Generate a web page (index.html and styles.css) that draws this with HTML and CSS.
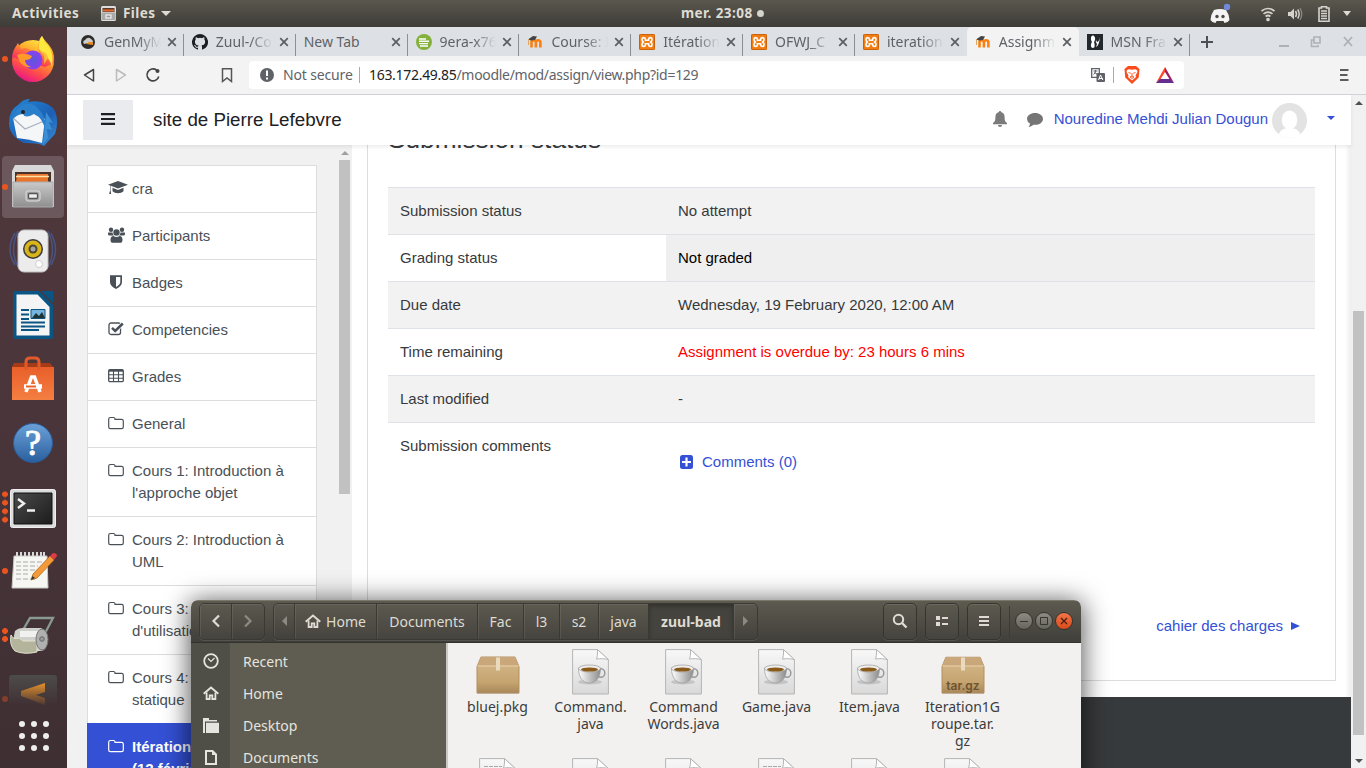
FILE: index.html
```html
<!DOCTYPE html>
<html lang="en">
<head>
<meta charset="utf-8">
<title>site de Pierre Lefebvre</title>
<link rel="stylesheet" href="styles.css">
</head>
<body>
<svg class="defs" width="0" height="0">
  <defs>
    <linearGradient id="gFox" x1="0.8" y1="0" x2="0.3" y2="1"><stop offset="0" stop-color="#fff044"/><stop offset=".4" stop-color="#ffa02a"/><stop offset=".72" stop-color="#ff4b4b"/><stop offset="1" stop-color="#e5128d"/></linearGradient>
    <radialGradient id="gGlobe"><stop offset="0" stop-color="#5b58d8"/><stop offset="1" stop-color="#8a3ff0"/></radialGradient>
    <linearGradient id="gBird" x1="0" y1="0" x2="1" y2="1"><stop offset="0" stop-color="#2489d6"/><stop offset=".6" stop-color="#1c5fb4"/><stop offset="1" stop-color="#3b90d8"/></linearGradient>
    <linearGradient id="gCab" x1="0" y1="0" x2="0" y2="1"><stop offset="0" stop-color="#c9c9c9"/><stop offset="1" stop-color="#8f8f8f"/></linearGradient>
    <linearGradient id="gBag" x1="0" y1="0" x2="0" y2="1"><stop offset="0" stop-color="#e95f2a"/><stop offset="1" stop-color="#f47f42"/></linearGradient>
    <linearGradient id="gHelp" x1="0" y1="0" x2="0" y2="1"><stop offset="0" stop-color="#6ba1d8"/><stop offset="1" stop-color="#2a5f9f"/></linearGradient>
    <linearGradient id="gTerm" x1="0" y1="0" x2="1" y2="1"><stop offset="0" stop-color="#4a4a4a"/><stop offset="1" stop-color="#1c1c1c"/></linearGradient>
    <linearGradient id="gBox" x1="0" y1="0" x2="0" y2="1"><stop offset="0" stop-color="#d6b98c"/><stop offset=".7" stop-color="#c5a470"/><stop offset="1" stop-color="#a9875a"/></linearGradient>
    <linearGradient id="gPage" x1="0" y1="0" x2="0" y2="1"><stop offset="0" stop-color="#f8f8f8"/><stop offset="1" stop-color="#d9d9d9"/></linearGradient>
    <linearGradient id="gCup" x1="0" y1="0" x2="1" y2="0"><stop offset="0" stop-color="#fff"/><stop offset="1" stop-color="#8c8c8c"/></linearGradient>
    <linearGradient id="gSub" x1="0" y1="0" x2="0" y2="1"><stop offset="0" stop-color="#4d4c4a"/><stop offset="1" stop-color="#4d4c4a" stop-opacity="0"/></linearGradient>
    <linearGradient id="gSubS" x1="0" y1="0" x2="0" y2="1"><stop offset="0" stop-color="#e8912c"/><stop offset="1" stop-color="#b06c25" stop-opacity=".15"/></linearGradient>
    <symbol id="folder" viewBox="0 0 16 16"><path d="M.7 4.2A1.7 1.7 0 0 1 2.4 2.5h3A1.5 1.5 0 0 1 7 4v.4h6.600A1.700 1.700 0 0 1 15.300 6v6A1.700 1.700 0 0 1 13.600 13.700H2.400A1.700 1.700 0 0 1 .7 12z" fill="none" stroke="currentColor" stroke-width="1.200"/></symbol>
    <symbol id="moodle" viewBox="0 0 16 16"><path d="M4.500 13.500V8.500a2.200 2.200 0 0 1 4.400 0V13.500m0-5a2.200 2.200 0 0 1 4.500 0V13.500" fill="none" stroke="#f98012" stroke-width="2.600"/><path d="M1 5.500 6 2l4 .5L8 6 4 6.500z" fill="#444"/><path d="M1.500 5v6" stroke="#dca96c"/></symbol>
    <symbol id="xampp" viewBox="0 0 16 16"><rect width="16" height="16" rx="1.500" fill="#f57c10"/><rect x=".5" y=".5" width="15" height="15" rx="1" fill="none" stroke="#c9620a"/><path d="M3 5.300A1.700 1.700 0 0 1 6.400 5.300v1h3.200v-1a1.700 1.700 0 0 1 3.400 0Q13 7 11.700 8 13 9 13 10.700a1.700 1.700 0 0 1-3.400 0v-1H6.400v1a1.700 1.700 0 0 1-3.400 0Q3 9 4.300 8 3 7 3 5.300z" fill="none" stroke="#fff" stroke-width="1.600"/></symbol>
    <symbol id="x" viewBox="0 0 10 10"><path d="m1.200 1.200 7.600 7.600m0-7.600-7.600 7.600" stroke="#5b5e62" stroke-width="1.700"/></symbol>
    <symbol id="home" viewBox="0 0 16 14"><path d="M.7 7.800 8 1.500l7.300 6.300" fill="none" stroke="currentColor" stroke-width="1.900"/><path d="M3.600 6.500V13H6.700V9.300h2.600V13h3.100V6.500" fill="none" stroke="currentColor" stroke-width="1.800"/></symbol>
    <symbol id="page" viewBox="0 0 37 46"><path d="M.6.600h24.900l10.900 10V45H.6z" fill="url(#gPage)" stroke="#b5b5b5"/><path d="M25.500.600c.3 5-.5 8-1 9.500 4-.8 8-.5 11.900.5z" fill="#fff" stroke="#b5b5b5"/></symbol>
    <symbol id="lined" viewBox="0 0 37 46"><use href="#page" width="37" height="46"/><path d="M5 8.500h18M5 12.500h27" stroke="#aaa" stroke-dasharray="4 1"/></symbol>
    <symbol id="java" viewBox="0 0 37 46"><use href="#page" width="37" height="46"/><ellipse cx="18" cy="33" rx="12" ry="2.500" fill="#c4c4c4"/><ellipse cx="29" cy="24" rx="3.800" ry="4.300" fill="none" stroke="#999" stroke-width="1.500"/><path d="M6.500 19c0 9 4 15 11 15s11-6 11-15z" fill="url(#gCup)" stroke="#999" stroke-width=".7"/><ellipse cx="17.500" cy="19.500" rx="11" ry="3.500" fill="#eee" stroke="#999" stroke-width=".7"/><ellipse cx="17.500" cy="20.500" rx="8.500" ry="2" fill="#8a5a18"/></symbol>
    <symbol id="box" viewBox="0 0 44 38"><path d="M1 35h42v2H1z" fill="#aaa"/><path d="M5 .5h34L43 10v26.500H1V10z" fill="url(#gBox)" stroke="#b28f60"/><path d="M5 .5h34L43 9.500H1z" fill="#caa77a"/><path d="M1.500 9.500h41" stroke="#e9d4ac"/><path d="M20 1h4v13h-4z" fill="#e9d9bd"/></symbol>
  </defs>
</svg>

<header class="topbar">
  <div class="tb-left">
    <span class="ub b activities">Activities</span>
    <svg width="15" height="15" viewBox="0 0 15 15"><rect width="15" height="15" rx="1.500" fill="#ddd"/><path d="M1.500 2h12v4h-12z" fill="#5b3a2a"/><path d="M2 3.500h11v2H2z" fill="#e9682c"/><path d="M.500 6.500h14V14H.500z" fill="#aaa"/><rect x="5" y="9" width="5" height="3" fill="#999" stroke="#fff"/></svg>
    <span class="ub b files">Files</span><i class="tri"></i>
  </div>
  <div class="clock"><span class="ub b">mer. 23:08</span><i class="dot"></i></div>
  <div class="tb-right">
    <svg class="discord" width="22" height="22" viewBox="0 0 22 22"><path d="M5 7q6-2 12 0 3 4 3.500 10-2 3-5 3l-1-2H7.500l-1 2q-3 0-5-3Q2 11 5 7z" fill="#f4f4f4"/><circle cx="8" cy="13.500" r="1.700" fill="#4b4a44"/><circle cx="14" cy="13.500" r="1.700" fill="#4b4a44"/><circle cx="18" cy="4" r="3.200" fill="#7289da"/></svg>
    <svg class="wifi" width="16" height="16" viewBox="0 0 16 16" fill="none" stroke="#d5d3cd" stroke-width="1.700"><path d="M1.500 5q6.500-5 13 0M3.500 7.800q4.500-3.500 9 0M5.600 10.500q2.400-2 4.800 0"/><circle cx="8" cy="13.500" r="1" fill="#d5d3cd"/></svg>
    <svg class="vol" width="16" height="16" viewBox="0 0 16 16"><path d="M1 6h2.500L7 2.500v11L3.500 10H1z" fill="#d5d3cd"/><path d="M8.500 5q2 3 0 6M10.700 3.500q3 4.500 0 9" fill="none" stroke="#d5d3cd" stroke-width="1.500"/><path d="M13 2q3.500 6 0 12" fill="none" stroke="#8a8882" stroke-width="1.300"/></svg>
    <svg class="bat" width="14" height="16" viewBox="0 0 14 16"><path d="M4.500 2V.8h5V2H12v13.200H2V2z" fill="none" stroke="#d5d3cd" stroke-width="1.600"/><path d="M4 5h6M4 7.500h6M4 10h6M4 12.500h6" stroke="#d5d3cd" stroke-width="1.400"/></svg>
    <i class="tri"></i>
  </div>
</header>

<div class="desk">
  <nav class="dock">
    <div class="slot d1"><svg width="48" height="48" viewBox="0 0 48 48"><circle cx="24" cy="26" r="21" fill="url(#gFox)"/><path d="M3 22C4 14 8 10 9 8l3 6c4-2 7-1 9 1l9 2c-2-7 0-13 3-16 3 7 14 11 12 27l-9 4z" fill="url(#gFox)"/><path d="M30 14q0-9 3-13 2 6 7 11 5 8 3 19-3-8-6-9z" fill="#ffe93f"/><circle cx="24" cy="25" r="9.500" fill="url(#gGlobe)"/><path d="M8 20q7-3 15 1-1 4-7 4 0 5 6 7-7 1-11-5z" fill="#ff9a2a"/><path d="M30 16q7 3 5 13l4-6q-1-7-9-7z" fill="#ffb93b"/></svg></div>
    <div class="slot"><svg width="50" height="50" viewBox="0 0 50 50"><path d="M10 7q6-7 12-6l-2 3q15-3 25 6c5 6 5 18 2 26L36 48q-3-3-20-3Q1 38 1 25 1 12 10 7z" fill="url(#gBird)"/><path d="M5 20l4 20q12 1 25 5l3-24q-14-8-24-6z" fill="#f5f6f8"/><path d="m5 20 12 11 19-8" fill="none" stroke="#a9b2bd" stroke-width="1.300"/><path d="M13 8Q5 14 4 22 9 16 15 16 17 21 26 16 35 20 37 32 40 18 26 7 18 4 13 8z" fill="#2b80cc"/><path d="M38 14l7 11-4-1 3 8-5-1 1 9-5 7 2-20z" fill="#3c8fd4"/><circle cx="15" cy="14" r="2" fill="#222"/></svg></div>
    <div class="slot sel d1"><svg width="44" height="46" viewBox="0 0 44 46"><path d="M4 1h36l3 6v36H1V7z" fill="#d8d8d8"/><path d="M4 8h36v11H4z" fill="#4a3228"/><path d="M6 10h31v8H5z" fill="#e9742c"/><path d="M5 12.500h33" stroke="#ffe2a2" stroke-width="1.500"/><path d="M2 18h40v25H2z" fill="url(#gCab)" stroke="#aaa"/><rect x="15" y="27" width="14" height="10" rx="2" fill="#aaa" stroke="#ddd"/><rect x="17.500" y="29.500" width="9" height="5" rx="1" fill="#eee" stroke="#555" stroke-width="1.300"/></svg></div>
    <div class="slot"><svg width="50" height="46" viewBox="0 0 50 46"><path d="M7 5Q-3 22 7 37M10 3Q1 22 10 39M43 5q9 17 0 32M40 3q9 19 0 36" fill="none" stroke="#4a5480" stroke-width="1.500"/><rect x="10" y="2" width="30" height="42" rx="6" fill="#ececec" stroke="#c0c0c0"/><circle cx="25" cy="21" r="10" fill="#3b3b3b"/><circle cx="25" cy="21" r="8.500" fill="#d9b51c"/><circle cx="25" cy="21" r="4.500" fill="#4d4630"/><circle cx="25" cy="21" r="2.500" fill="#a6a6a6"/><circle cx="31" cy="36" r="3.500" fill="#fff" stroke="#ccc"/></svg></div>
    <div class="slot"><svg width="40" height="48" viewBox="0 0 40 48"><path d="M2 0h24l14 14v32q0 2-2 2H2q-2 0-2-2V2Q0 0 2 0z" fill="#0b5585"/><path d="M28 0h12v12z" fill="#0b5585"/><path d="M3.500 3.500h21L36.500 16v28.500h-33z" fill="#f4f4f4"/><path d="M8 19h8M8 23.500h8M8 28h8M8 31.500h24M8 35.500h24M8 39h18" stroke="#0b5585" stroke-width="2"/><path d="M18 18.500h14v9H18z" fill="#75b4de" stroke="#0b5585"/><path d="m19 27 4-5 3 3 3-4 3 6z" fill="#233"/></svg></div>
    <div class="slot"><svg width="44" height="46" viewBox="0 0 44 46"><path d="M3 7h36l3 4H1z" fill="#a63b17"/><path d="M1 11h42v33H1z" fill="url(#gBag)"/><path d="M15 14V6q0-4 4-4h5q4 0 4 4v8" fill="none" stroke="#e15a2c" stroke-width="3"/><path d="m15 36 5.500-15h3L29 36m-12-6h10" fill="none" stroke="#fff" stroke-width="3.500"/><path d="M13 30.500h18" stroke="#fff" stroke-width="4.500"/><path d="M15 30.500h10" stroke="#e9622c" stroke-width="2"/></svg></div>
    <div class="slot"><svg width="42" height="42" viewBox="0 0 42 42"><circle cx="21" cy="21" r="19.500" fill="url(#gHelp)" stroke="#2b5c98"/><text x="21" y="33" class="qm">?</text></svg></div>
    <div class="slot d4 term"><svg width="46" height="40" viewBox="0 0 46 40"><rect x=".5" y=".5" width="45" height="38" rx="2" fill="#dcdcdc" stroke="#efefef"/><path d="M4 4h38v31H4z" fill="url(#gTerm)" stroke="#111"/><path d="m8 10 6 4.500L8 19M17 21.500h8" fill="none" stroke="#eee" stroke-width="2.400"/></svg></div>
    <div class="slot d1"><svg width="48" height="42" viewBox="0 0 48 42"><path d="M5 6h33l1 32H3z" fill="#f6f6f2" stroke="#c9c9c4"/><path d="M8 6v-4m4 4v-4m4 4v-4m4 4v-4m4 4v-4m4 4v-4m4 4v-4m3 4v-4" stroke="#d8d8d8" stroke-width="2"/><path d="M7 12h26M7 16h22M7 20h22M7 24h14M7 29h20" stroke="#aaa" stroke-dasharray="5 2"/><path d="m22 30 2-6L41 6l4 4-17 18z" fill="#f29a3a" stroke="#b76a1d" stroke-width=".8"/><path d="m41 6 3-3q4 0 4 3l-3 4z" fill="#dd3b45"/><path d="m22 30 1.500-4 2.500 2z" fill="#333"/></svg></div>
    <div class="slot d2"><svg width="46" height="42" viewBox="0 0 46 42"><path d="M13 16 20 4h23L32 25" fill="none" stroke="#8a9a92" stroke-width="2.300"/><path d="M5 17q3-3 8-3h18q6 3 6 13t-7 10H8q-7-4-3-20z" fill="#cfcfcb"/><path d="M10 17h19v6H10z" fill="#f1f1ef"/><path d="M1 21q2 5 8 3l4 3h14v11q-13 3-22-1-6-6-4-16z" fill="#b3b49b" stroke="#e1e1cc"/><ellipse cx="32" cy="25.500" rx="6" ry="10.500" fill="#b0b0b0" stroke="#777"/><circle cx="32" cy="25" r="2.300" fill="#999" stroke="#666"/></svg></div>
    <div class="slot sub d1"><svg width="48" height="30" viewBox="0 0 48 30"><rect width="48" height="30" rx="3" fill="url(#gSub)"/><path d="M36 8v9l-9 3 9 3v7L12 21v-5z" fill="url(#gSubS)"/></svg></div>
    <div class="apps"><i></i><i></i><i></i><i></i><i></i><i></i><i></i><i></i><i></i></div>
  </nav>

  <section class="browser">
    <div class="tabs">
      <div class="tab"><svg class="fav" viewBox="0 0 16 16"><circle cx="8" cy="8" r="7" fill="#2e2c2b"/><path d="M4 10q-2-3 1-4 3-4 6-1 2 1 2 3z" fill="#ccc"/><path d="m6 10 3-2h4v3z" fill="#e98b20"/></svg><span class="ub t">GenMyM</span><svg class="cl"><use href="#x"/></svg></div>
      <div class="tab"><svg class="fav" viewBox="0 0 16 16"><path d="M8 0a8 8 0 0 0-2.530 15.590c.4.070.550-.170.550-.380v-1.490c-2.010.370-2.530-.490-2.690-.940-.090-.230-.480-.940-.820-1.130-.280-.150-.680-.520-.010-.530.630-.010 1.080.580 1.230.820.720 1.210 1.870.870 2.330.660.070-.520.280-.870.510-1.070-1.780-.200-3.640-.890-3.640-3.950 0-.870.310-1.590.820-2.150-.080-.200-.360-1.020.080-2.120 0 0 .670-.210 2.200.820a7.400 7.400 0 0 1 4 0c1.530-1.040 2.200-.820 2.200-.820.440 1.100.160 1.920.080 2.120.510.560.820 1.270.820 2.150 0 3.070-1.870 3.750-3.650 3.950.290.250.540.730.540 1.480v2.200c0 .210.150.460.550.380A8 8 0 0 0 8 0" fill="#1b1f23"/></svg><span class="ub t">Zuul-/Co</span><svg class="cl"><use href="#x"/></svg></div>
      <div class="tab"><span class="ub t nofade">New Tab</span><svg class="cl"><use href="#x"/></svg></div>
      <div class="tab"><svg class="fav" viewBox="0 0 16 16"><circle cx="8" cy="8" r="8" fill="#83b13c"/><path d="M3 5h7M3 7.300h10M3 9.600h9M4 12h8" stroke="#fff" stroke-width="1.400"/></svg><span class="ub t">9era-x76</span><svg class="cl"><use href="#x"/></svg></div>
      <div class="tab"><svg class="fav"><use href="#moodle"/></svg><span class="ub t">Course: I</span><svg class="cl"><use href="#x"/></svg></div>
      <div class="tab"><svg class="fav"><use href="#xampp"/></svg><span class="ub t">Itération</span><svg class="cl"><use href="#x"/></svg></div>
      <div class="tab"><svg class="fav"><use href="#xampp"/></svg><span class="ub t">OFWJ_C</span><svg class="cl"><use href="#x"/></svg></div>
      <div class="tab nosep"><svg class="fav"><use href="#xampp"/></svg><span class="ub t">iteration</span><svg class="cl"><use href="#x"/></svg></div>
      <div class="tab active nosep"><svg class="fav"><use href="#moodle"/></svg><span class="ub t">Assignm</span><svg class="cl"><use href="#x"/></svg></div>
      <div class="tab"><svg class="fav" viewBox="0 0 16 16"><path d="M0 0h16v16H0z" fill="#23282c"/><path d="M7 2c-3-2-4 3-2 6-2 3-1 6 1 6s2-3 1-6c2-3 1-5 0-6zM13 3q-1 5-3 5l-1-2q-1 2 1 4l-1 3q3-1 4-10z" fill="#fff"/></svg><span class="ub t">MSN Fra</span><svg class="cl"><use href="#x"/></svg></div>
      <svg class="plus" width="14" height="14" viewBox="0 0 14 14"><path d="M7 1v12M1 7h12" stroke="#4c4f53" stroke-width="2"/></svg>
      <div class="wctl">
        <svg width="12" height="12" viewBox="0 0 12 12"><path d="M1 10h10" stroke="#aeb1b5" stroke-width="2"/></svg>
        <svg width="12" height="12" viewBox="0 0 12 12" fill="none" stroke="#aeb1b5" stroke-width="1.600"><path d="M4 1h6v6H4zM4 4H1.500v6.500H8V9"/></svg>
        <svg width="12" height="12" viewBox="0 0 12 12"><path d="m2 1 8 9m0-9-8 9" stroke="#aeb1b5" stroke-width="1.800"/></svg>
      </div>
    </div>
    <div class="toolbar">
      <svg class="nv" viewBox="0 0 16 16"><path d="M12.500 2.500v11.500L3.500 8z" fill="none" stroke="#444" stroke-width="1.500" stroke-linejoin="round"/></svg>
      <svg class="nv" viewBox="0 0 16 16"><path d="M3.500 2.500v11.500l9-6z" fill="none" stroke="#bbb" stroke-width="1.500" stroke-linejoin="round"/></svg>
      <svg class="nv" viewBox="0 0 16 16"><path d="M13.800 9.500A6 6 0 1 1 11.500 3" fill="none" stroke="#444" stroke-width="1.600"/><circle cx="12.500" cy="4" r="2" fill="#444"/></svg>
      <svg class="nv bm" viewBox="0 0 16 16"><path d="M3.500 1.800h9v12.700L8 11l-4.500 3.500z" fill="none" stroke="#555" stroke-width="1.500"/></svg>
      <div class="url">
        <svg width="14" height="14" viewBox="0 0 14 14"><circle cx="7" cy="7" r="7" fill="#5f6368"/><path d="M7 2.500v5.500M7 9.500v2" stroke="#fff" stroke-width="2"/></svg>
        <span class="ub ns">Not secure</span><i class="vs"></i><span class="ub addr"><b>163.172.49.85</b>/moodle/mod/assign/view.php?id=129</span>
        <svg class="tr" width="14" height="14" viewBox="0 0 14 14"><path d="M.7.700h7.600v8.600H.7z" fill="#fff" stroke="#5f6368" stroke-width="1.300"/><path d="M2.500 3h4M4.500 2v1q0 2-2 3.500M3.500 4.500l3 2" stroke="#5f6368" fill="none"/><rect x="5.500" y="5" width="8.500" height="9" rx="1" fill="#5f6368"/><path d="m7.500 12 2-5 2.300 5M8 10.500h3.500" stroke="#fff" fill="none"/></svg>
        <i class="vs"></i>
        <svg class="brave" width="16" height="18" viewBox="0 0 16 18"><path d="M4 0h8l3.500 3-.8 8.500L8 18l-6.700-6.500L.5 3z" fill="#fb4b1b"/><path d="m3 4 2-.8 3 .6 3-.6 2 .8.500 2-2 3.500.5 1.500L8 14.500 4 11l.5-1.500L2.500 6z" fill="#fff"/><path d="m4.500 6.500 2.300.8m4.700-.8-2.300.8M8 7v3.500M6 11l2-1 2 1-2 1.500z" stroke="#fb4b1b" fill="none" stroke-width=".9"/></svg>
        <svg class="bat2" width="18" height="16" viewBox="0 0 18 16"><path d="M9 0 0 16l4-3L9 5z" fill="#ff4724"/><path d="m9 0 9 16-4-3L9 5z" fill="#9e1f63"/><path d="M0 16h18l-4-4H4z" fill="#662d91"/></svg>
      </div>
      <svg class="menu" width="10" height="12" viewBox="0 0 10 12"><path d="M1 1h8.500M1 6h7.500M1 11h8.500" stroke="#5c5c5c" stroke-width="1.800"/></svg>
    </div>

    <div class="view">
      <div class="page">
        <header class="mnav">
          <button class="burger"><svg width="14" height="12" viewBox="0 0 14 12"><path d="M0 1.200h14M0 6h14M0 10.800h14" stroke="#1d2125" stroke-width="2.200"/></svg></button>
          <span class="brand">site de Pierre Lefebvre</span>
          <svg class="bell" width="14" height="16" viewBox="0 0 14 16"><path d="M7 0c.7 0 1 .4 1 1 2.500.6 3.600 2.500 3.600 5 0 4 1 5 2.400 6v1.300H0V12c1.400-1 2.400-2 2.400-6 0-2.500 1.100-4.400 3.600-5 0-.6.300-1 1-1zM5 14h4q0 2-2 2t-2-2z" fill="#7b7b7b"/></svg>
          <svg class="cm" width="16" height="14" viewBox="0 0 16 14"><path d="M8 0c4.400 0 8 2.600 8 5.900s-3.600 5.900-8 5.900L6.500 11.700Q4.500 13.700 1.500 14 2.800 12.500 3 10.500 0 8.800 0 5.900C0 2.600 3.600 0 8 0z" fill="#757575"/></svg>
          <a class="user">Nouredine Mehdi Julian Dougun</a>
          <svg class="ava" width="35" height="35" viewBox="0 0 35 35"><clipPath id="ac"><circle cx="17.500" cy="17.500" r="17.500"/></clipPath><g clip-path="url(#ac)"><path d="M0 0h35v35H0z" fill="#e3e3e3"/><ellipse cx="17.500" cy="17" rx="7.800" ry="9.500" fill="#fff"/><path d="M5 36q2-9 8-10.500h9q6 1.500 8 10.500z" fill="#fff"/></g></svg>
          <i class="caret"></i>
        </header>
        <div class="below">
          <aside class="drawer">
            <ul>
              <li><svg viewBox="0 0 20 16" class="wide"><path d="m10 1 10 3.800L10 8.600 0 4.800z" fill="#495057"/><path d="M4.500 7.800 10 9.900l5.500-2.100v3.400q-2 2-5.500 2t-5.500-2z" fill="#495057"/><path d="M2 5.500v5l-.8 3.500h2l-.7-3.500V6" fill="#495057"/></svg><span>cra</span></li>
              <li><svg viewBox="0 0 17 16" class="mid"><g fill="#495057"><circle cx="8.500" cy="5.500" r="3.200"/><circle cx="3" cy="2.700" r="2.200"/><circle cx="14" cy="2.700" r="2.200"/><path d="M0 5.500h4.500Q4.700 7.500 6 8.500H1.500Q0 8.500 0 7zM17 5.500h-4.500q-.2 2-1.500 3h4.500q1.500 0 1.500-1.500z"/><path d="M2.500 13c0-2.500 1-4 3-4q3 2 6 0c2 0 3 1.500 3 4 0 2-1 2.800-2.500 2.800H5c-1.500 0-2.500-.8-2.500-2.800z"/></g></svg><span>Participants</span></li>
              <li><svg viewBox="0 0 16 16"><path d="M8 15Q2 12 2 8V1.200h12V8q0 4-6 7z" fill="#495057"/><path d="M8 3h4.300v5q0 2.500-4.300 5z" fill="#fff"/></svg><span>Badges</span></li>
              <li><svg viewBox="0 0 16 16"><rect x="1" y="2" width="11.500" height="11.500" rx="2" fill="none" stroke="#495057" stroke-width="1.300"/><path d="m4 6.800 3.200 3.200L14.800 2.500" fill="none" stroke="#fff" stroke-width="4"/><path d="m4 6.800 3.200 3.200L14.800 2.500" fill="none" stroke="#495057" stroke-width="2.500"/></svg><span>Competencies</span></li>
              <li><svg viewBox="0 0 16 16"><rect x=".7" y="1.700" width="14.600" height="12" rx="1.300" fill="none" stroke="#495057" stroke-width="1.300"/><path d="M1 2.700h14" stroke="#495057" stroke-width="2"/><path d="M1 6.700h14M1 10.200h14M5.500 3v10.500M10.500 3v10.500" stroke="#495057" stroke-width="1.100"/></svg><span>Grades</span></li>
              <li><svg><use href="#folder"/></svg><span>General</span></li>
              <li><svg><use href="#folder"/></svg><span>Cours 1: Introduction à l'approche objet</span></li>
              <li><svg><use href="#folder"/></svg><span>Cours 2: Introduction à UML</span></li>
              <li><svg><use href="#folder"/></svg><span>Cours 3:<br>d'utilisation</span></li>
              <li><svg><use href="#folder"/></svg><span>Cours 4:<br>statique</span></li>
              <li class="on"><svg><use href="#folder"/></svg><span>Itération<br>(12 février</span></li>
            </ul>
            <div class="sb"><i class="up"></i><i class="thumb"></i></div>
          </aside>
          <main>
            <div class="card">
              <h3>Submission status</h3>
              <table>
                <tr><td>Submission status</td><td>No attempt</td></tr>
                <tr><td>Grading status</td><td class="ng">Not graded</td></tr>
                <tr><td>Due date</td><td>Wednesday, 19 February 2020, 12:00 AM</td></tr>
                <tr><td>Time remaining</td><td class="late">Assignment is overdue by: 23 hours 6 mins</td></tr>
                <tr><td>Last modified</td><td>-</td></tr>
                <tr><td>Submission comments</td><td class="com"><a><svg width="13" height="14" viewBox="0 0 13 14"><rect width="13" height="14" rx="2.500" fill="#3450d5"/><path d="M6.500 2.500v9M2 7h9" stroke="#fff" stroke-width="2.200"/></svg>Comments (0)</a></td></tr>
              </table>
              <a class="next">cahier des charges<i></i></a>
            </div>
            <footer></footer>
          </main>
        </div>
      </div>
      <div class="psb"><i class="up"></i><i class="thumb"></i><i class="down"></i></div>
    </div>
  </section>
</div>

<section class="win">
  <div class="whead">
    <div class="grp">
      <span class="bt bk"><svg width="10" height="14" viewBox="0 0 10 14"><path d="M8 1.500 2.500 7 8 12.500" fill="none" stroke="#dfdbd2" stroke-width="2.200"/></svg></span>
      <span class="bt fw"><svg width="10" height="14" viewBox="0 0 10 14"><path d="M2 1.500 7.500 7 2 12.500" fill="none" stroke="#8d8a81" stroke-width="2.200"/></svg></span>
    </div>
    <div class="grp path">
      <span class="bt p0"><i class="al"></i></span>
      <span class="bt p1"><svg width="16" height="14"><use href="#home"/></svg><b class="ub">Home</b></span>
      <span class="bt p2"><b class="ub">Documents</b></span>
      <span class="bt p3"><b class="ub">Fac</b></span>
      <span class="bt p4"><b class="ub">l3</b></span>
      <span class="bt p5"><b class="ub">s2</b></span>
      <span class="bt p6"><b class="ub">java</b></span>
      <span class="bt p7 cur"><b class="ub">zuul-bad</b></span>
      <span class="bt p8"><i class="ar"></i></span>
    </div>
    <div class="tools">
      <span class="sq"><svg width="16" height="16" viewBox="0 0 16 16"><circle cx="6.500" cy="6.500" r="4.700" fill="none" stroke="#dfdbd2" stroke-width="2"/><path d="m10 10 4.500 4.500" stroke="#dfdbd2" stroke-width="2.400"/></svg></span>
      <span class="sq"><svg width="14" height="12" viewBox="0 0 14 12"><path d="M1 1h4v4H1zm0 6h4v4H1zM7 2h6v2H7zm0 6h6v2H7z" fill="#dfdbd2"/></svg></span>
      <span class="sq"><svg width="12" height="12" viewBox="0 0 12 12"><path d="M1 2h10M1 6h10M1 10h10" stroke="#dfdbd2" stroke-width="2"/></svg></span>
      <i class="vsep"></i>
      <span class="rb"><svg width="16" height="16" viewBox="0 0 16 16"><path d="M4 8.500h8" stroke="#35342f"/></svg></span>
      <span class="rb"><svg width="16" height="16" viewBox="0 0 16 16"><path d="M4.500 4.500h7v7h-7z" fill="none" stroke="#35342f"/></svg></span>
      <span class="rb red"><svg width="16" height="16" viewBox="0 0 16 16"><path d="m5 5 6 6m0-6-6 6" stroke="#4a1f10" stroke-width="1.300"/></svg></span>
    </div>
  </div>
  <div class="wbody">
    <div class="side">
      <div class="row"><span class="ic"><svg width="16" height="16" viewBox="0 0 16 16"><circle cx="8" cy="8" r="6.800" fill="none" stroke="#e6e4df" stroke-width="1.800"/><path d="m5 5.500 3 3L11.500 5" fill="none" stroke="#e6e4df" stroke-width="1.200"/></svg></span><span class="ub">Recent</span></div>
      <div class="row"><span class="ic"><svg width="16" height="14"><use href="#home"/></svg></span><span class="ub">Home</span></div>
      <div class="row"><span class="ic"><svg width="16" height="15" viewBox="0 0 16 15"><path d="M0 0h6v2h8v1.500H2V15H0z" fill="#e6e4df"/><path d="M3 4.700h13V15H3z" fill="#e6e4df"/></svg></span><span class="ub">Desktop</span></div>
      <div class="row"><span class="ic"><svg width="12" height="15" viewBox="0 0 12 15"><path d="M1 1h6.500L11 4.500V14H1z" fill="none" stroke="#e6e4df" stroke-width="2"/><path d="M7 0v5h5z" fill="#e6e4df"/></svg></span><span class="ub">Documents</span></div>
    </div>
    <div class="grid">
      <div class="f"><svg class="bx"><use href="#box"/></svg><span class="ub">bluej.pkg</span></div>
      <div class="f"><svg class="jv"><use href="#java"/></svg><span class="ub">Command.<br>java</span></div>
      <div class="f"><svg class="jv"><use href="#java"/></svg><span class="ub">Command<br>Words.java</span></div>
      <div class="f"><svg class="jv"><use href="#java"/></svg><span class="ub">Game.java</span></div>
      <div class="f"><svg class="jv"><use href="#java"/></svg><span class="ub">Item.java</span></div>
      <div class="f"><svg class="bx" viewBox="0 0 44 38"><use href="#box" width="44" height="38"/><text x="22" y="33" class="tgz">tar.gz</text></svg><span class="ub">Iteration1G<br>roupe.tar.<br>gz</span></div>
      <div class="f"><svg class="jv"><use href="#lined"/></svg></div>
      <div class="f"><svg class="jv"><use href="#java"/></svg></div>
      <div class="f"><svg class="jv"><use href="#java"/></svg></div>
      <div class="f"><svg class="jv"><use href="#lined"/></svg></div>
      <div class="f"><svg class="jv"><use href="#java"/></svg></div>
      <div class="f"><svg class="jv"><use href="#java"/></svg></div>
    </div>
  </div>
</section>
</body>
</html>
```

FILE: styles.css
```css
* { box-sizing: border-box; }
body { margin: 0; width: 1366px; height: 768px; overflow: hidden; display: flex; flex-direction: column; font: 15px/22px "Liberation Sans", Arial, sans-serif; color: #373a3c; position: relative; }
svg, i { display: block; flex: none; }
.defs { position: absolute; }
.ub { font-family: "Noto Sans", "Open Sans", sans-serif; font-size: 14px; line-height: 17px; font-weight: 400; white-space: nowrap; }
.b { font-weight: 600; }

.topbar { height: 27px; flex: none; display: flex; justify-content: space-between; background: linear-gradient(#5a574e, #3d3c37); color: #dfdbd2; position: relative; }
.topbar .ub { font-size: 13.500px; font-weight: 700; letter-spacing: .450px; }
.tb-left, .tb-right { display: flex; align-items: center; }
.tb-left { padding-left: 12px; }
.activities { width: 68px; margin-right: 21px; }
.files { margin-left: 7px; width: 34px; }
.tri { width: 0; height: 0; border: 5px solid transparent; border-top-color: #dfdbd2; border-bottom: 0; }
.tb-left .tri { margin-left: 4px; }
.clock { position: absolute; left: 681px; top: 0; height: 27px; display: flex; align-items: center; }
.dot { width: 7px; height: 7px; border-radius: 50%; background: #d5d3cd; margin-left: 4px; }
.tb-right { padding-right: 15px; }
.discord { margin-right: 29px; }
.wifi { margin-right: 11px; }
.vol { margin-right: 14px; }
.bat { margin-right: 12px; }
.tb-right .tri { border-width: 5px 4.500px 0; }

.desk { flex: 1; display: flex; min-height: 0; }
.dock { width: 67px; flex: none; background: linear-gradient(#52383b, #4b363b 45%, #3e2f33); display: flex; flex-direction: column; align-items: center; padding-right: 2px; }
.slot { width: 62px; height: 64px; display: flex; align-items: center; justify-content: center; position: relative; flex: none; }
.slot.sel::before { content: ""; position: absolute; inset: 1px 0; border-radius: 4px; background: rgba(255,255,255,.17); }
.slot svg { position: relative; }
.slot::after { position: absolute; left: 0; top: 50%; width: 6px; border-radius: 3px; transform: translateY(-50%); }
.d1::after { content: ""; height: 6px; background: #e95420; }
.d2::after, .d4::after { content: ""; border-radius: 0; height: 16px; background: radial-gradient(circle, #e95420 2.600px, transparent 3.200px) 0 0 / 6px 8px; }
.d4::after { height: 34px; background-size: 6px 8.500px; }
.term { padding-top: 3px; }
.sub { height: 46px; align-items: flex-start; padding-top: 8px; }
.sub::after { opacity: .4; top: 32px; }
.qm { font: 400 36px "Liberation Serif", serif; fill: #fff; stroke: #fff; text-anchor: middle; }
.apps { display: grid; grid-template-columns: repeat(3, 6px); gap: 6px; margin: 8px 0 0 2px; }
.apps i { width: 6px; height: 6px; border-radius: 50%; background: #eee; }

.browser { flex: 1; display: flex; flex-direction: column; min-width: 0; }
.tabs { height: 29px; flex: none; background: #dde1e5; display: flex; padding-left: 5px; position: relative; }
.tab { width: 111.850px; flex: none; display: flex; align-items: center; padding: 0 5px 0 8px; position: relative; }
.tab::after { content: ""; position: absolute; right: 0; top: 7px; bottom: 0; width: 1px; background: #8c9094; }
.nosep::after { display: none; }
.active { background: #f3f3f4; border-radius: 5px 5px 0 0; }
.fav { width: 16px; height: 16px; margin-right: 8px; }
.t { flex: 1; min-width: 0; overflow: hidden; color: #5f6368; -webkit-mask-image: linear-gradient(90deg, #000 60%, transparent); line-height: 20px; }
.nofade { -webkit-mask-image: none; }
.cl { width: 10px; height: 10px; margin: 0 2px 0 6px; }
.plus { margin: 8px 0 0 10px; }
.wctl { margin-left: auto; display: flex; gap: 20px; align-items: center; padding-right: 12px; }
.toolbar { height: 39px; flex: none; background: #f3f3f4; border-bottom: 1px solid #d3d2db; display: flex; align-items: center; padding-left: 14px; }
.nv { width: 16px; height: 16px; margin-right: 16px; }
.bm { margin-left: 42px; margin-right: 14px; }
.url { width: 935px; height: 28px; background: #fff; border-radius: 4px; display: flex; align-items: center; padding-left: 11px; }
.url .ub { margin-top: -1px; }
.url .ns { color: #5f6368; margin-left: 9px; width: 70px; letter-spacing: -.150px; }
.vs { width: 1px; height: 16px; background: #aaa; margin: 0 9px 0 6px; }
.url .addr { color: #5f6368; margin-right: auto; letter-spacing: -.300px; }
.addr b { font-weight: 400; color: #222; }
.url .tr { margin: 0 2px 0 0; }
.url .brave { margin-right: 16px; margin-left: 1px; }
.bat2 { margin-right: 10px; }
.menu { margin-left: auto; margin-right: 17px; }

.view { flex: 1; display: flex; min-height: 0; }
.page { flex: 1; display: flex; flex-direction: column; min-width: 0; background: #fff; }
.mnav { height: 50px; flex: none; display: flex; align-items: center; padding: 0 16px; background: #fff; box-shadow: 0 2px 4px rgba(0,0,0,.08); position: relative; z-index: 1; }
.burger { width: 50px; height: 40px; border: 0; padding: 0 0 2px; background: #e9ebee; display: flex; align-items: center; justify-content: center; }
.brand { font-size: 18.750px; color: #1d2125; margin-left: 20px; margin-right: auto; }
.bell { margin: 0 20px 2px 0; }
.cm { margin-right: 11px; }
a { color: #3450d5; }
.user { padding-bottom: 2px; }
.ava { margin: 0 20px 0 4px; }
.caret { border: 4.500px solid transparent; border-top-color: #3450d5; border-bottom: 0; margin-bottom: 4px; }
.below { flex: 1; display: flex; min-height: 0; overflow: hidden; }
.drawer { width: 285px; flex: none; background: #f1f1f1; display: flex; justify-content: space-between; }
.drawer ul { list-style: none; margin: 20px 0 0 20px; padding: 0; width: 230px; }
.drawer li { display: flex; background: #fff; border: 1px solid #dcdddf; border-bottom: 0; padding: 12px 20px; color: #495057; }
.drawer li.on { background: #3450d5; border-color: #3450d5; color: #fff; font-weight: 700; }
.drawer li svg { width: 16px; height: 16px; margin: 2px 8px 0 0; }
.drawer li svg.wide { width: 20px; margin-right: 4px; }
.drawer li svg.mid { width: 17px; margin-right: 7px; }
.drawer li span { white-space: nowrap; }
.drawer li:nth-child(7) span, .drawer li:nth-child(8) span { white-space: normal; }
.sb { width: 15px; padding: 6px 2px 0; }
.up { border: 4px solid transparent; border-bottom-color: #a0a0a0; border-top: 0; width: 0; margin: 0 auto; }
.thumb { background: #c1c1c1; }
.sb .thumb { height: 334px; margin-top: 5px; }
main { flex: 1; display: flex; flex-direction: column; background: linear-gradient(90deg, transparent 993px, #eee 999px); }
.card { height: 536px; margin: 0 15px; border: 1px solid #dcdddf; border-top: 0; padding: 0 20px; display: flex; flex-direction: column; }
h3 { font-size: 26.250px; font-weight: 400; line-height: 32px; margin: -22px 0 32px; }
table { border-collapse: collapse; width: 927px; table-layout: fixed; }
td { height: 47px; padding: 12px; border-top: 1px solid #dee2e6; vertical-align: top; line-height: 22px; }
td:first-child { width: 278px; }
tr:nth-child(odd) { background: #f2f2f2; }
td.ng { background: #efefef; color: #000; }
td.late { color: red; }
td.com { padding-top: 28px; }
.com a { display: flex; align-items: center; gap: 9px; margin-left: 2px; }
.next { margin-top: auto; align-self: flex-end; display: flex; align-items: center; margin-bottom: 43px; margin-right: 15px; }
.next i { border: 4.500px solid transparent; border-left: 9px solid #3450d5; border-right: 0; margin-left: 8px; }
footer { margin-top: 16px; flex: 1; background: #373a3c; }
.psb { width: 15px; background: #f1f1f1; padding: 6px 2px 5px; display: flex; flex-direction: column; }
.psb .up { border-bottom-color: #505050; }
.psb .thumb { width: 11px; height: 424px; margin-top: 206px; }
.down { border: 4px solid transparent; border-top-color: #505050; border-bottom: 0; width: 0; margin: auto auto 0; }

.win { position: absolute; left: 191px; top: 600px; width: 890px; height: 200px; border-radius: 7px 7px 0 0; box-shadow: 0 3px 26px 2px rgba(0,0,0,.65); overflow: hidden; z-index: 5; }
.whead { height: 43px; background: linear-gradient(#5d5a50, #413f3a); border-top: 1px solid #79766c; border-bottom: 1px solid #33322e; display: flex; padding: 2px 0 0 8px; }
.grp { display: flex; height: 37px; border: 1px solid #3a3934; border-radius: 5px; overflow: hidden; margin-right: 8px; box-shadow: 0 1px 0 rgba(255,255,255,.1); }
.bt { display: flex; align-items: center; justify-content: center; gap: 5px; color: #dfdbd2; border-right: 1px solid #3a3934; background: linear-gradient(#5c594f, #46443e); box-shadow: inset 1px 1px 0 rgba(255,255,255,.08); padding-bottom: 1px; }
.bt:last-child { border-right: 0; }
.bk { width: 32px; padding-left: 1px; } .fw { width: 32px; background: none; }
.p0 { width: 21px; background: none; } .p1 { width: 82px; } .p2 { width: 101px; } .p3 { width: 46px; } .p4 { width: 36px; } .p5 { width: 39px; } .p6 { width: 50px; } .p7 { width: 85px; } .p8 { width: 23px; background: none; }
.p1 svg { margin-bottom: 1px; }
.bt .ub { padding-top: 1px; }
.bt.cur { background: #45433d; box-shadow: inset 0 2px 4px rgba(0,0,0,.3); }
.cur .ub { font-weight: 700; }
.al, .ar { border: 5px solid transparent; }
.al { border-right-color: #8d8a81; border-left: 0; }
.ar { border-left-color: #8d8a81; border-right: 0; }
.tools { display: flex; margin-left: auto; padding-right: 7px; }
.sq { width: 34px; height: 37px; border: 1px solid #35342f; border-radius: 5px; margin-right: 8px; padding-bottom: 1px; display: flex; align-items: center; justify-content: center; background: linear-gradient(#5c594f, #46443e); box-shadow: inset 0 1px 0 rgba(255,255,255,.1), 0 1px 0 rgba(255,255,255,.1); }
.vsep { width: 1px; height: 31px; background: #3c3b36; margin: 3px 4px 0 0; }
.rb { width: 18px; height: 18px; margin: 9px 1px 0; border-radius: 50%; border: 1px solid #35342f; background: linear-gradient(#8d8b83, #66645d); }
.rb.red { background: linear-gradient(#f37449, #d94b1b); }
.wbody { display: flex; height: 157px; }
.side { width: 257px; border-right: 2px solid #cbc9c4; background: linear-gradient(90deg, #4f4e47 38px, #45443e 38px, #5f5c51 39px); padding-top: 2px; color: #e6e4df; }
.row { height: 32px; display: flex; align-items: center; }
.ic { width: 39px; display: flex; justify-content: center; margin-right: 13px; color: #e6e4df; }
.grid { flex: 1; background: #f2f1f0; display: grid; grid-template-columns: repeat(6, 93px); grid-template-rows: 109px 109px; padding: 6px 0 0 3px; overflow: hidden; }
.f { display: flex; flex-direction: column; align-items: center; text-align: center; color: #3c3c3c; }
.jv { width: 37px; height: 46px; margin-bottom: 3px; }
.bx { width: 44px; height: 39px; margin: 7px 0 3px; }
.tgz { font: 600 12px Inter, sans-serif; fill: #6e5430; text-anchor: middle; }
```
